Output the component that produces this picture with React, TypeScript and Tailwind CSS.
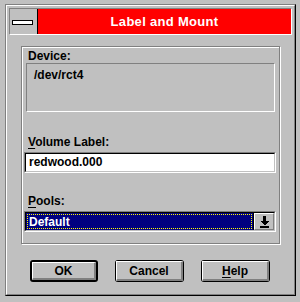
import React from 'react';

const font = { fontFamily: '"Liberation Sans", Arial, sans-serif' };

const Btn: React.FC<{ label: React.ReactNode; isDefault?: boolean; w: string }> = ({ label, isDefault, w }) => (
    <div className={`${w} h-[22px] bg-black rounded-[3px] ${isDefault ? 'p-[2px]' : 'p-[1px]'}`}>
        <div className="h-full bg-[#c0c0c0] border-t border-l border-t-white border-l-white border-b-2 border-r-2 border-b-[#808080] border-r-[#808080] flex items-center justify-center text-[12px] font-bold text-black leading-none">
            {label}
        </div>
    </div>
);

export default function App() {
    return (
        <div className="w-[300px] h-[302px] bg-[#c0c0c0] pt-[4px] pl-[5px] overflow-hidden" style={font}>
            <div className="w-[291px] h-[292px] border border-t-[#808080] border-l-[#808080] border-r-black border-b-black">
                <div className="h-full border border-t-white border-l-white border-r-[#808080] border-b-[#808080] p-[2px] flex flex-col">
                    {/* title bar */}
                    <div className="h-[27px] flex border border-t-[#808080] border-l-[#808080] border-r-white border-b-white">
                        <div className="w-[28px] border-r border-r-black flex items-center pl-[2px] pt-[1px]">
                            <div className="w-[21px] h-[5px] bg-white border border-black" />
                        </div>
                        <div className="flex-1 bg-[#ff0000] flex items-center justify-center text-white font-bold text-[13px] tracking-[0.3px]">
                            Label and Mount
                        </div>
                    </div>

                    {/* group */}
                    <div className="mt-[11px] ml-[12px] w-[259px] h-[198px] border border-[#808080] shadow-[inset_1px_1px_0_#fff,1px_1px_0_#fff] flex flex-col text-[12px] font-bold text-black leading-[14px]">
                        <div className="pt-[2px] pl-[6px]">Device:</div>
                        <div className="ml-[4px] w-[249px] h-[49px] border border-t-[#808080] border-l-[#808080] border-r-white border-b-white pt-[4px] pl-[7px]">
                            /dev/rct4
                        </div>

                        <div className="mt-[23px] pl-[6px]">
                            <span className="underline underline-offset-[2px]">V</span>olume Label:
                        </div>
                        <div className="mt-[3px] ml-[2px] w-[252px] h-[21px] border border-t-[#808080] border-l-[#808080] border-r-white border-b-white">
                            <div className="h-full bg-white border border-t-black border-l-black border-r-[#c0c0c0] border-b-[#c0c0c0] pl-[3px] leading-[17px]">
                                redwood.000
                            </div>
                        </div>

                        <div className="mt-[21px] pl-[6px]">
                            <span className="underline underline-offset-[2px]">P</span>ools:
                        </div>
                        <div className="mt-[3px] ml-[2px] w-[252px] h-[21px] border border-t-[#808080] border-l-[#808080] border-r-white border-b-white">
                            <div className="h-full flex border border-t-black border-l-black border-r-[#c0c0c0] border-b-[#c0c0c0]">
                                <div className="flex-1 bg-[#000080] p-[1px]">
                                    <div className="h-full border border-dotted border-[#ffff00] pl-[1px] text-white flex items-center leading-none">
                                        Default
                                    </div>
                                </div>
                                <div className="w-[21px] border-l border-l-black">
                                    <div className="h-full bg-[#c0c0c0] border-t border-l border-t-white border-l-white border-b border-r border-b-[#808080] border-r-[#808080] flex items-center justify-center">
                                        <svg width="11" height="12" viewBox="0 0 11 12" shapeRendering="crispEdges">
                                            <rect x="4" y="0" width="3" height="5" fill="#000" />
                                            <polygon points="1,5 10,5 5.5,9.5" fill="#000" />
                                            <rect x="1" y="10" width="9" height="2" fill="#000" />
                                        </svg>
                                    </div>
                                </div>
                            </div>
                        </div>
                    </div>

                    {/* buttons */}
                    <div className="mt-[16px] pl-[21px] flex gap-[17px]">
                        <Btn w="w-[68px]" isDefault label="OK" />
                        <Btn w="w-[69px]" label="Cancel" />
                        <Btn
                            w="w-[69px]"
                            label={
                                <span>
                                    <span className="underline underline-offset-[2px]">H</span>elp
                                </span>
                            }
                        />
                    </div>
                </div>
            </div>
        </div>
    );
}
